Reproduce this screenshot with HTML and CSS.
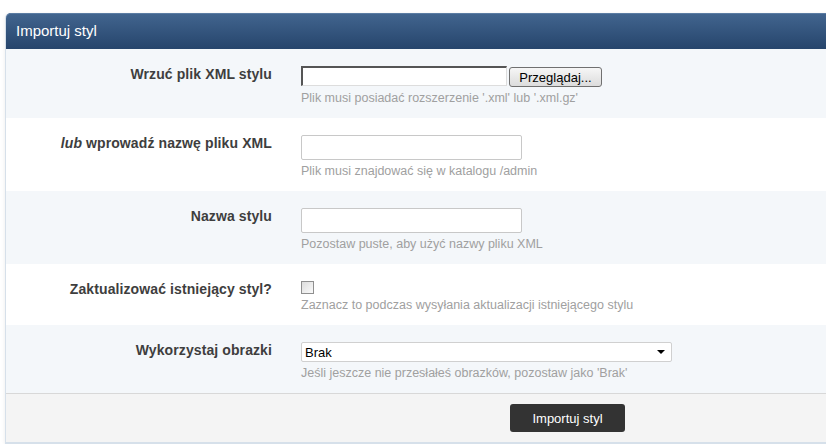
FILE: index.html
```html
<!DOCTYPE html>
<html lang="pl">
<head>
    <meta charset="UTF-8">
    <title>Importuj styl</title>
    <link rel="stylesheet" href="styles.css">
</head>
<body>

<div class="panel">
    <h3 class="panel-title">Importuj styl</h3>

    <div class="row alt">
        <div class="label">Wrzuć plik XML stylu</div>
        <div class="field">
            <div class="file-input">
                <span class="file-box"></span>
                <button class="browse-btn">Przeglądaj...</button>
            </div>
            <div class="explain">Plik musi posiadać rozszerzenie '.xml' lub '.xml.gz'</div>
        </div>
    </div>

    <div class="row">
        <div class="label"><em>lub</em> wprowadź nazwę pliku XML</div>
        <div class="field">
            <input type="text" class="text-input">
            <div class="explain">Plik musi znajdować się w katalogu /admin</div>
        </div>
    </div>

    <div class="row alt">
        <div class="label">Nazwa stylu</div>
        <div class="field">
            <input type="text" class="text-input">
            <div class="explain">Pozostaw puste, aby użyć nazwy pliku XML</div>
        </div>
    </div>

    <div class="row">
        <div class="label">Zaktualizować istniejący styl?</div>
        <div class="field">
            <input type="checkbox" class="check">
            <div class="explain">Zaznacz to podczas wysyłania aktualizacji istniejącego stylu</div>
        </div>
    </div>

    <div class="row alt">
        <div class="label">Wykorzystaj obrazki</div>
        <div class="field">
            <div class="select-box">
                <span>Brak</span>
                <span class="arrow"></span>
            </div>
            <div class="explain">Jeśli jeszcze nie przesłałeś obrazków, pozostaw jako 'Brak'</div>
        </div>
    </div>

    <div class="submit-row">
        <button class="submit-btn">Importuj styl</button>
    </div>
</div>

</body>
</html>
```

FILE: styles.css
```css
body {
    font-family: "Liberation Sans", Arial, sans-serif;
    margin: 0;
    padding: 0;
    background-color: #fff;
    overflow: hidden;
}
.panel {
    margin: 13px -40px 0 5px;
    border: 1px solid #d6e0ea;
    border-top: none;
    border-radius: 5px 5px 0 0;
    box-shadow: 0 1px 4px rgba(0, 0, 0, 0.08);
}
.panel-title {
    margin: 0;
    height: 36px;
    line-height: 36px;
    padding-left: 10px;
    font-size: 15px;
    font-weight: normal;
    color: #fff;
    background: linear-gradient(to bottom, #42658f, #26456c);
    border-radius: 5px 5px 0 0;
    box-shadow: inset 0 1px 0 #5b7ca3;
}
.row {
    display: flex;
    padding: 17px 0 12px;
    background-color: #fff;
}
.row.alt {
    background-color: #f4f7fa;
}
.label {
    width: 266px;
    margin-right: 29px;
    text-align: right;
    font-size: 14px;
    font-weight: bold;
    line-height: 17px;
    letter-spacing: 0.1px;
    color: #3e3e3e;
}
.label em {
    font-style: italic;
}
.field {
    flex: 1;
}
.explain {
    margin-top: 3px;
    font-size: 12.5px;
    line-height: 16px;
    color: #a0a0a0;
}
.file-input {
    display: flex;
    align-items: flex-start;
    margin-bottom: 3px;
}
.file-box {
    display: block;
    width: 203px;
    height: 17px;
    background: #fff;
    border: 2px solid #555;
    border-right: 1px solid #ddd;
    border-bottom: 1px solid #ddd;
}
.browse-btn {
    margin: 1px 0 0 2px;
    width: 93px;
    height: 20px;
    padding: 0;
    font-family: "Liberation Sans", Arial, sans-serif;
    font-size: 13px;
    color: #000;
    background: linear-gradient(to bottom, #f6f6f6, #dcdcdc);
    border: 1px solid #707070;
    border-radius: 3px;
}
.text-input {
    display: block;
    box-sizing: border-box;
    width: 221px;
    height: 25px;
    margin: 0;
    border: 1px solid #c8c8c8;
    border-radius: 2px;
    background: #fff;
}
.check {
    display: block;
    -webkit-appearance: none;
    appearance: none;
    width: 13px;
    height: 13px;
    margin: 0 0 2px;
    border: 1px solid #8f8f8f;
    background: linear-gradient(135deg, #dcdcdc, #fafafa);
}
.select-box {
    display: flex;
    justify-content: space-between;
    align-items: center;
    box-sizing: border-box;
    width: 371px;
    height: 20px;
    padding: 0 6px 0 3px;
    font-size: 13px;
    color: #000;
    background: #fff;
    border: 1px solid #d0d0d0;
    border-radius: 2px;
}
.arrow {
    width: 0;
    height: 0;
    border-left: 4px solid transparent;
    border-right: 4px solid transparent;
    border-top: 4px solid #000;
}
.submit-row {
    padding: 10px 0 10px 504px;
    background-color: #f4f4f4;
    border-top: 1px solid #d8d8d8;
    border-bottom: 1px solid #d6e0ea;
}
.submit-btn {
    width: 115px;
    height: 28px;
    padding: 0;
    font-family: "Liberation Sans", Arial, sans-serif;
    font-size: 13px;
    color: #fff;
    background-color: #333;
    border: none;
    border-radius: 3px;
}
```
